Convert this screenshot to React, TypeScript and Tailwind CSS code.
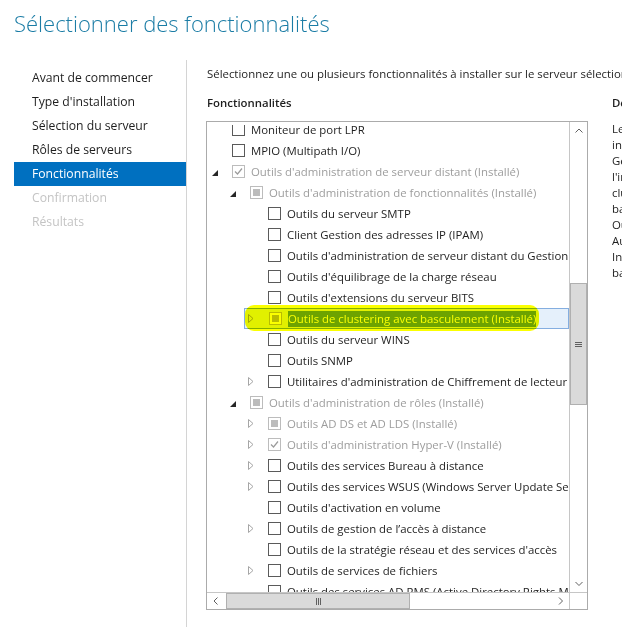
import React from 'react';

type CheckState = 'none' | 'checked' | 'partial';
type Expander = 'none' | 'open' | 'closed';

interface TreeRow {
  text: string;
  level: 0 | 1 | 2;
  expander: Expander;
  check: CheckState;
  installed?: boolean;
  selected?: boolean;
}

const navItems = [
  { label: 'Avant de commencer', state: 'normal' },
  { label: "Type d'installation", state: 'normal' },
  { label: 'Sélection du serveur', state: 'normal' },
  { label: 'Rôles de serveurs', state: 'normal' },
  { label: 'Fonctionnalités', state: 'active' },
  { label: 'Confirmation', state: 'disabled' },
  { label: 'Résultats', state: 'disabled' },
];

const rows: TreeRow[] = [
  { text: 'Moniteur de port LPR', level: 0, expander: 'none', check: 'none' },
  { text: 'MPIO (Multipath I/O)', level: 0, expander: 'none', check: 'none' },
  { text: "Outils d'administration de serveur distant (Installé)", level: 0, expander: 'open', check: 'checked', installed: true },
  { text: "Outils d'administration de fonctionnalités (Installé)", level: 1, expander: 'open', check: 'partial', installed: true },
  { text: 'Outils du serveur SMTP', level: 2, expander: 'none', check: 'none' },
  { text: 'Client Gestion des adresses IP (IPAM)', level: 2, expander: 'none', check: 'none' },
  { text: "Outils d'administration de serveur distant du Gestionnaire de serveur", level: 2, expander: 'none', check: 'none' },
  { text: "Outils d'équilibrage de la charge réseau", level: 2, expander: 'none', check: 'none' },
  { text: "Outils d'extensions du serveur BITS", level: 2, expander: 'none', check: 'none' },
  { text: 'Outils de clustering avec basculement (Installé)', level: 2, expander: 'closed', check: 'partial', installed: true, selected: true },
  { text: 'Outils du serveur WINS', level: 2, expander: 'none', check: 'none' },
  { text: 'Outils SNMP', level: 2, expander: 'none', check: 'none' },
  { text: "Utilitaires d'administration de Chiffrement de lecteur BitLocker", level: 2, expander: 'closed', check: 'none' },
  { text: "Outils d'administration de rôles (Installé)", level: 1, expander: 'open', check: 'partial', installed: true },
  { text: 'Outils AD DS et AD LDS (Installé)', level: 2, expander: 'closed', check: 'partial', installed: true },
  { text: "Outils d'administration Hyper-V (Installé)", level: 2, expander: 'closed', check: 'checked', installed: true },
  { text: 'Outils des services Bureau à distance', level: 2, expander: 'closed', check: 'none' },
  { text: 'Outils des services WSUS (Windows Server Update Services)', level: 2, expander: 'closed', check: 'none' },
  { text: "Outils d'activation en volume", level: 2, expander: 'none', check: 'none' },
  { text: 'Outils de gestion de l’accès à distance', level: 2, expander: 'closed', check: 'none' },
  { text: "Outils de la stratégie réseau et des services d'accès", level: 2, expander: 'none', check: 'none' },
  { text: 'Outils de services de fichiers', level: 2, expander: 'closed', check: 'none' },
  { text: 'Outils des services AD RMS (Active Directory Rights Management Services)', level: 2, expander: 'none', check: 'none' },
];

const descriptionLines = [
  'Les Outils de clustering avec basculement',
  'incluent le composant logiciel enfichable',
  'Gestionnaire du cluster de basculement,',
  "l'interface Mise à jour adaptée aux",
  'clusters et le module Windows PowerShell de',
  'basculement. Ils incluent également les',
  'Outils de ligne de commande et les',
  'Autres outils du cluster de basculement.',
  'Interface de mise à jour pour le cluster de',
  'basculement.',
];

const indent = ['pl-0', 'pl-[18px]', 'pl-[36px]'];

function ExpandIcon({ kind }: { kind: Expander }) {
  if (kind === 'open') {
    return (
      <svg width="6" height="6" viewBox="0 0 6 6" className="mt-[3px]">
        <path d="M6 0 L6 6 L0 6 Z" fill="#262626" />
      </svg>
    );
  }
  if (kind === 'closed') {
    return (
      <svg width="6" height="9" viewBox="0 0 6 9">
        <path d="M0.5 0.5 L5 4.5 L0.5 8.5 Z" fill="none" stroke="#a6a6a6" />
      </svg>
    );
  }
  return null;
}

function CheckBox({ check, installed }: { check: CheckState; installed?: boolean }) {
  return (
    <div
      className={`w-[13px] h-[13px] shrink-0 border bg-white flex items-center justify-center ${
        installed ? 'border-[#bcbcbc]' : 'border-[#5a5a5a]'
      }`}
    >
      {check === 'partial' && <div className="w-[7px] h-[7px] bg-[#bcbcbc]" />}
      {check === 'checked' && (
        <svg width="9" height="9" viewBox="0 0 9 9">
          <path d="M1 4.5 L3.5 7 L8 1.5" fill="none" stroke="#9b9b9b" strokeWidth="1.2" />
        </svg>
      )}
    </div>
  );
}

function Row({ row }: { row: TreeRow }) {
  return (
    <div className={`relative h-[21px] flex items-center ${indent[row.level]}`}>
      <div
        className={`flex-1 h-full flex items-center min-w-0 ${
          row.selected ? 'bg-[#e5f0fb] shadow-[inset_0_0_0_1px_#84aee0] ml-[1px]' : ''
        }`}
      >
        <div className={`w-[25px] shrink-0 flex items-center ${row.selected ? 'pl-[4px]' : 'pl-[5px]'}`}>
          <ExpandIcon kind={row.expander} />
        </div>
        <CheckBox check={row.check} installed={row.installed} />
        {row.selected ? (
          <span className="ml-[6px] whitespace-nowrap leading-[16px] bg-[#6fa300] text-white">{row.text}</span>
        ) : (
          <span className={`ml-[6px] whitespace-nowrap ${row.installed ? 'text-[#9d9d9d]' : 'text-[#1e1e1e]'}`}>
            {row.text}
          </span>
        )}
      </div>
      {row.selected && (
        <div className="pointer-events-none absolute left-[38px] top-[-3px] h-[26px] w-[294px] rounded-[9px] bg-[#fbff00] mix-blend-multiply" />
      )}
    </div>
  );
}

function Chevron({ dir }: { dir: 'up' | 'down' | 'left' | 'right' }) {
  const paths = {
    up: 'M0.5 4.5 L4 1 L7.5 4.5',
    down: 'M0.5 1 L4 4.5 L7.5 1',
    left: 'M4.5 0.5 L1 4 L4.5 7.5',
    right: 'M1 0.5 L4.5 4 L1 7.5',
  };
  const vertical = dir === 'up' || dir === 'down';
  return (
    <svg width={vertical ? 8 : 6} height={vertical ? 6 : 8} viewBox={vertical ? '0 0 8 6' : '0 0 6 8'}>
      <path d={paths[dir]} fill="none" stroke="#606060" strokeWidth="1" />
    </svg>
  );
}

function FeatureList() {
  return (
    <div className="w-[382px] h-[489px] border border-[#ababab] flex flex-col bg-white">
      <div className="h-[470px] flex">
        <div className="flex-1 min-w-0 pt-[3px]">
          <div className="h-full overflow-hidden">
            <div className="-mt-[6px]">
              {rows.map((row, i) => (
                <Row key={i} row={row} />
              ))}
            </div>
          </div>
        </div>
        <div className="w-[18px] shrink-0 border-l border-[#c6c6c6] flex flex-col">
          <div className="h-[17px] flex items-center justify-center">
            <Chevron dir="up" />
          </div>
          <div className="flex-1">
            <div className="mt-[144px] h-[122px] bg-[#dadada] border border-[#b0b0b0] flex items-center justify-center">
              <div className="flex flex-col gap-[1px]">
                <div className="w-[7px] h-[1px] bg-[#606060]" />
                <div className="w-[7px] h-[1px] bg-[#606060]" />
                <div className="w-[7px] h-[1px] bg-[#606060]" />
              </div>
            </div>
          </div>
          <div className="h-[17px] flex items-center justify-center">
            <Chevron dir="down" />
          </div>
        </div>
      </div>
      <div className="h-[17px] border-t border-[#c6c6c6] flex">
        <div className="w-[18px] flex items-center justify-center">
          <Chevron dir="left" />
        </div>
        <div className="ml-[1px] w-[184px] bg-[#dadada] border border-[#b0b0b0] flex items-center justify-center">
          <div className="flex gap-[1px]">
            <div className="w-[1px] h-[7px] bg-[#606060]" />
            <div className="w-[1px] h-[7px] bg-[#606060]" />
            <div className="w-[1px] h-[7px] bg-[#606060]" />
          </div>
        </div>
        <div className="flex-1" />
        <div className="w-[17px] flex items-center justify-center">
          <Chevron dir="right" />
        </div>
        <div className="w-[18px] border-l border-[#c6c6c6]" />
      </div>
    </div>
  );
}

export default function App() {
  return (
    <div className="w-[622px] h-[627px] overflow-hidden bg-white font-['Open_Sans',sans-serif] text-[11.4px] text-[#1e1e1e]">
      <div className="h-[60px] pl-[14px] pt-[8px]">
        <h1 className="text-[22px] leading-[30px] font-light text-[#1a7ca5] whitespace-nowrap">
          Sélectionner des fonctionnalités
        </h1>
      </div>

      <div className="flex h-[567px]">
        <nav className="w-[187px] shrink-0 border-r border-[#d4d4d4] pt-[6px] text-[12.2px]">
          {navItems.map((item) => (
            <div
              key={item.label}
              className={`ml-[14px] h-[24px] pl-[18px] leading-[24px] whitespace-nowrap ${
                item.state === 'active'
                  ? 'bg-[#0070c0] text-white'
                  : item.state === 'disabled'
                  ? 'text-[#c4c4c4]'
                  : 'text-[#1e1e1e]'
              }`}
            >
              {item.label}
            </div>
          ))}
        </nav>

        <main className="flex-1 min-w-0 pl-[19px] pt-[6px]">
          <p className="pl-[1px] leading-[16px] whitespace-nowrap">
            Sélectionnez une ou plusieurs fonctionnalités à installer sur le serveur sélectionné.
          </p>
          <div className="flex mt-[13px]">
            <div className="w-[382px] shrink-0">
              <h2 className="pl-[1px] leading-[16px] font-semibold">Fonctionnalités</h2>
              <div className="mt-[10px]">
                <FeatureList />
              </div>
            </div>
            <div className="ml-[24px] shrink-0">
              <h2 className="leading-[16px] font-semibold whitespace-nowrap">Description</h2>
              <div className="mt-[10px]">
                {descriptionLines.map((line) => (
                  <div key={line} className="leading-[16px] whitespace-nowrap">
                    {line}
                  </div>
                ))}
              </div>
            </div>
          </div>
        </main>
      </div>
    </div>
  );
}
